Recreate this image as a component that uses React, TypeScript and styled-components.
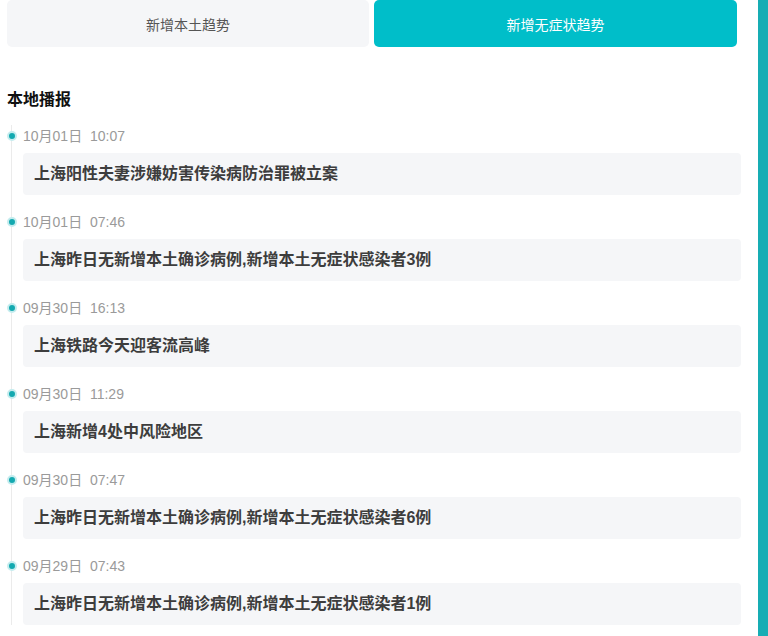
import React, { useState } from "react";
import styled, { createGlobalStyle } from "styled-components";

const GlobalStyle = createGlobalStyle`
    html, body {
        margin: 0;
        padding: 0;
        background: #fff;
        font-family: "Liberation Sans", "Noto Sans CJK SC", sans-serif;
    }
`;

const StyledPage = styled.div`
    display: flex;
    width: 768px;
    height: 636px;
    overflow: hidden;
`;

const StyledMain = styled.main`
    flex: 1;
    padding: 0 17px 0 7px;
`;

const StyledSideBar = styled.aside`
    width: 10px;
    background: #17adb4;
`;

const StyledTabs = styled.div`
    display: grid;
    grid-template-columns: 362px 1fr;
    column-gap: 5px;
    margin-right: 4px;
`;

const StyledTab = styled.button<{ $active: boolean }>`
    height: 47px;
    border: none;
    border-radius: 5px;
    font-family: inherit;
    font-size: 14px;
    cursor: pointer;
    background: ${(p) => (p.$active ? "#00bec9" : "#f5f6f8")};
    color: ${(p) => (p.$active ? "#fff" : "#555")};
`;

const StyledHeading = styled.h3`
    margin: 43px 0 15px;
    font-size: 16px;
    line-height: 20px;
    font-weight: 700;
    color: #111;
`;

const StyledTimeline = styled.ul`
    list-style: none;
    margin: 0 0 0 4px;
    padding: 0 0 0 11px;
    border-left: 1px solid #ebebeb;
`;

const StyledItem = styled.li`
    position: relative;
    margin-bottom: 16px;
`;

const StyledDot = styled.span`
    position: absolute;
    left: -16px;
    top: 6px;
    width: 6px;
    height: 6px;
    border-radius: 50%;
    background: #14a9b0;
    border: 2px solid #c4ecee;
`;

const StyledTime = styled.div`
    padding-top: 1px;
    font-size: 14px;
    line-height: 20px;
    color: #9a9a9a;
    white-space: pre;
`;

const StyledCard = styled.div`
    margin-top: 7px;
    height: 42px;
    line-height: 42px;
    padding: 0 11px;
    background: #f5f6f8;
    border-radius: 4px;
    font-size: 16px;
    font-weight: 700;
    color: #3d3d3d;
`;

const news = [
    { time: "10月01日  10:07", title: "上海阳性夫妻涉嫌妨害传染病防治罪被立案" },
    { time: "10月01日  07:46", title: "上海昨日无新增本土确诊病例,新增本土无症状感染者3例" },
    { time: "09月30日  16:13", title: "上海铁路今天迎客流高峰" },
    { time: "09月30日  11:29", title: "上海新增4处中风险地区" },
    { time: "09月30日  07:47", title: "上海昨日无新增本土确诊病例,新增本土无症状感染者6例" },
    { time: "09月29日  07:43", title: "上海昨日无新增本土确诊病例,新增本土无症状感染者1例" },
];

export default function App() {
    const [tab, setTab] = useState(1);
    const tabs = ["新增本土趋势", "新增无症状趋势"];

    return (
        <StyledPage>
            <GlobalStyle />
            <StyledMain>
                <StyledTabs>
                    {tabs.map((t, i) => (
                        <StyledTab key={t} $active={tab === i} onClick={() => setTab(i)}>
                            {t}
                        </StyledTab>
                    ))}
                </StyledTabs>

                <StyledHeading>本地播报</StyledHeading>

                <StyledTimeline>
                    {news.map((n) => (
                        <StyledItem key={n.time}>
                            <StyledDot />
                            <StyledTime>{n.time}</StyledTime>
                            <StyledCard>{n.title}</StyledCard>
                        </StyledItem>
                    ))}
                </StyledTimeline>
            </StyledMain>
            <StyledSideBar />
        </StyledPage>
    );
}
